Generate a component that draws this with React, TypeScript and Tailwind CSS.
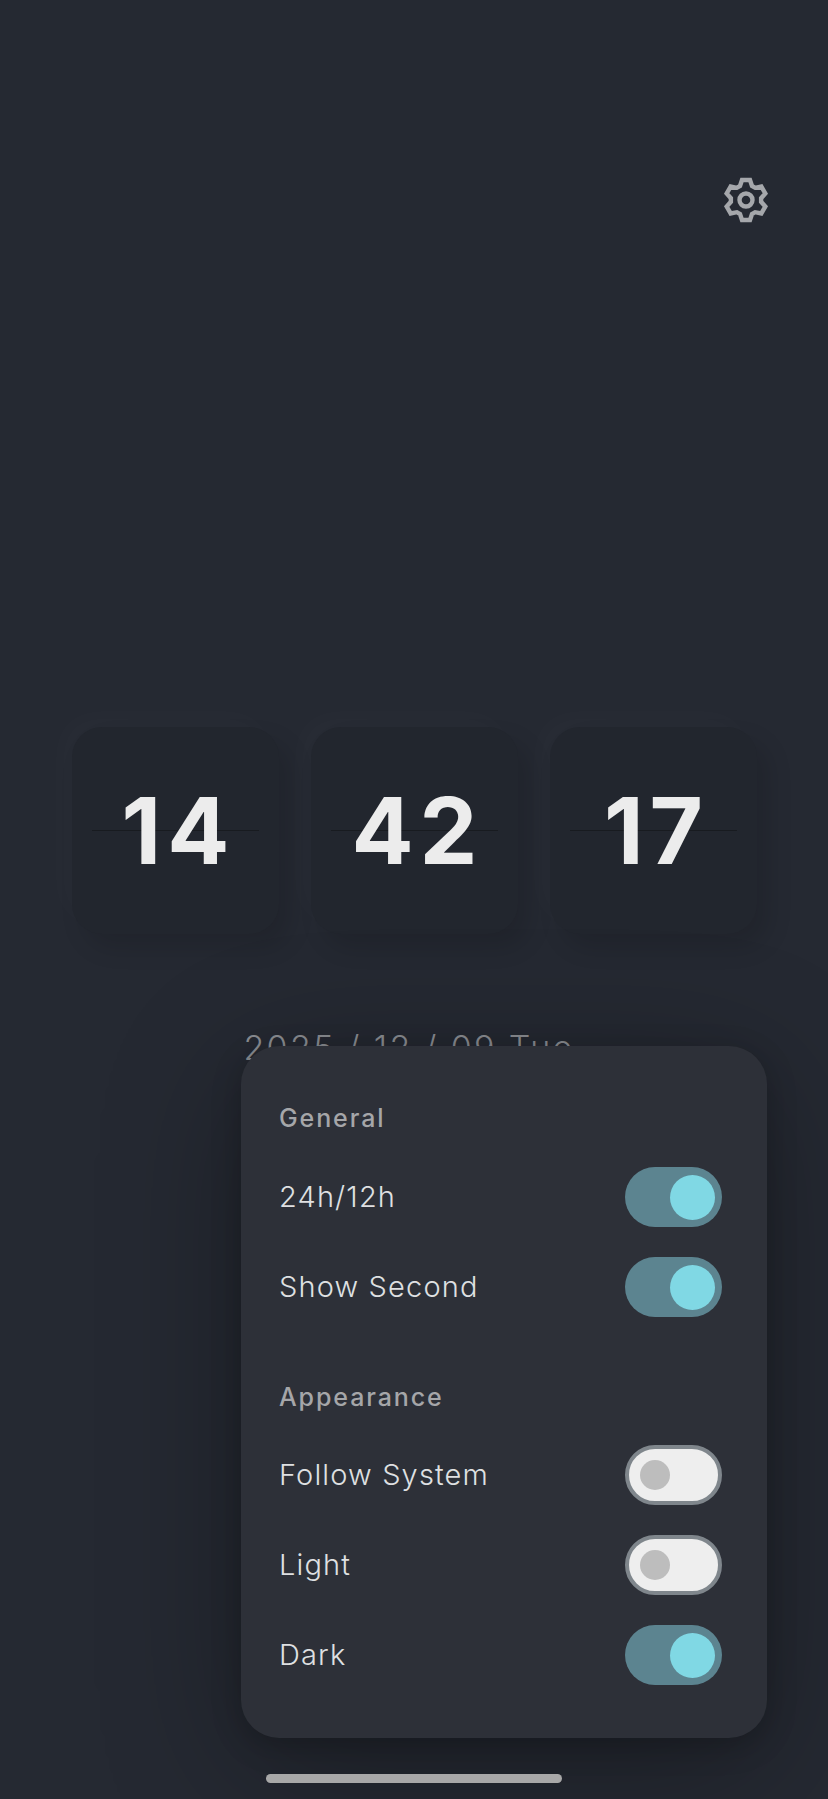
const gearPath = (() => {
  const parts: string[] = [];
  for (let i = 0; i < 6; i++) {
    const a = ((i * 60 - 90) * Math.PI) / 180;
    const p = (r: number, t: number) => {
      const x = 24 + r * Math.cos(a) - t * Math.sin(a);
      const y = 24 + r * Math.sin(a) + t * Math.cos(a);
      return `${x.toFixed(2)} ${y.toFixed(2)}`;
    };
    parts.push(`${i === 0 ? "M" : "L"}${p(14, -6)}`, `L${p(20, -4)}`, `L${p(20, 4)}`, `L${p(14, 6)}`);
  }
  return parts.join(" ") + " Z";
})();

function Gear() {
  return (
    <svg width="48" height="48" viewBox="0 0 48 48" fill="none" stroke="#a5a7ab" strokeWidth="4.4" strokeLinejoin="miter">
      <path d={gearPath} />
      <circle cx="24" cy="24" r="6.5" />
    </svg>
  );
}

function Card({ value }: { value: string }) {
  return (
    <div className="relative flex h-[207px] w-[207px] items-center justify-center rounded-[30px] bg-[#22262e] shadow-[-12px_-12px_30px_rgba(255,255,255,0.018),12px_14px_24px_rgba(0,0,0,0.12)]">
      <div className="absolute left-[20px] right-[20px] top-[103px] h-px bg-[#181b20]" />
      <span className="relative pl-[7px] text-[92px] font-bold leading-none tracking-[6px] text-[#ececec]">{value}</span>
    </div>
  );
}

function Toggle({ on }: { on: boolean }) {
  return on ? (
    <div className="flex h-[60px] w-[97px] items-center justify-end rounded-full bg-[#5c8490] pr-[7px]">
      <div className="h-[45px] w-[45px] rounded-full bg-[#80d8e4]" />
    </div>
  ) : (
    <div className="flex h-[60px] w-[97px] items-center rounded-full border-4 border-[#7f868c] bg-[#eeeeee] pl-[11px]">
      <div className="h-[30px] w-[30px] rounded-full bg-[#bdbdbd]" />
    </div>
  );
}

function Row({ label, on }: { label: string; on: boolean }) {
  return (
    <div className="flex items-center justify-between">
      <span className="text-[29px] font-light tracking-[1.15px] text-[#dfe0e2]">{label}</span>
      <Toggle on={on} />
    </div>
  );
}

export default function App() {
  return (
    <div className="relative h-[1799px] w-[828px] overflow-hidden bg-[#252932] font-['Inter',sans-serif]">
      <div className="flex justify-end pr-[58px] pt-[176px]">
        <Gear />
      </div>
      <div className="mt-[503px] flex justify-center gap-[32px]">
        <Card value="14" />
        <Card value="42" />
        <Card value="17" />
      </div>
      <div className="mt-[92px] pr-[10px] text-center text-[34px] font-light leading-[44px] tracking-[2.35px] text-[#8d9095]">
        2025 / 12 / 09 Tue
      </div>

      <div className="absolute left-[241px] top-[1046px] flex h-[692px] w-[526px] flex-col rounded-[38px] bg-[#2d3038] pl-[38px] pr-[45px] pt-[56px] shadow-[0_8px_30px_rgba(0,0,0,0.22),0_30px_140px_rgba(0,0,0,0.3)]">
        <div className="mb-[33px] text-[25px] font-medium leading-[32px] tracking-[1.9px] text-[#a5a6a9]">General</div>
        <div className="flex flex-col gap-[30px]">
          <Row label="24h/12h" on />
          <Row label="Show Second" on />
        </div>
        <div className="mb-[32px] mt-[64px] text-[25px] font-medium leading-[32px] tracking-[1.9px] text-[#a5a6a9]">Appearance</div>
        <div className="flex flex-col gap-[30px]">
          <Row label="Follow System" on={false} />
          <Row label="Light" on={false} />
          <Row label="Dark" on />
        </div>
      </div>

      <div className="absolute left-[266px] top-[1774px] h-[9px] w-[296px] rounded-full bg-[#a8a8a8]" />
    </div>
  );
}
